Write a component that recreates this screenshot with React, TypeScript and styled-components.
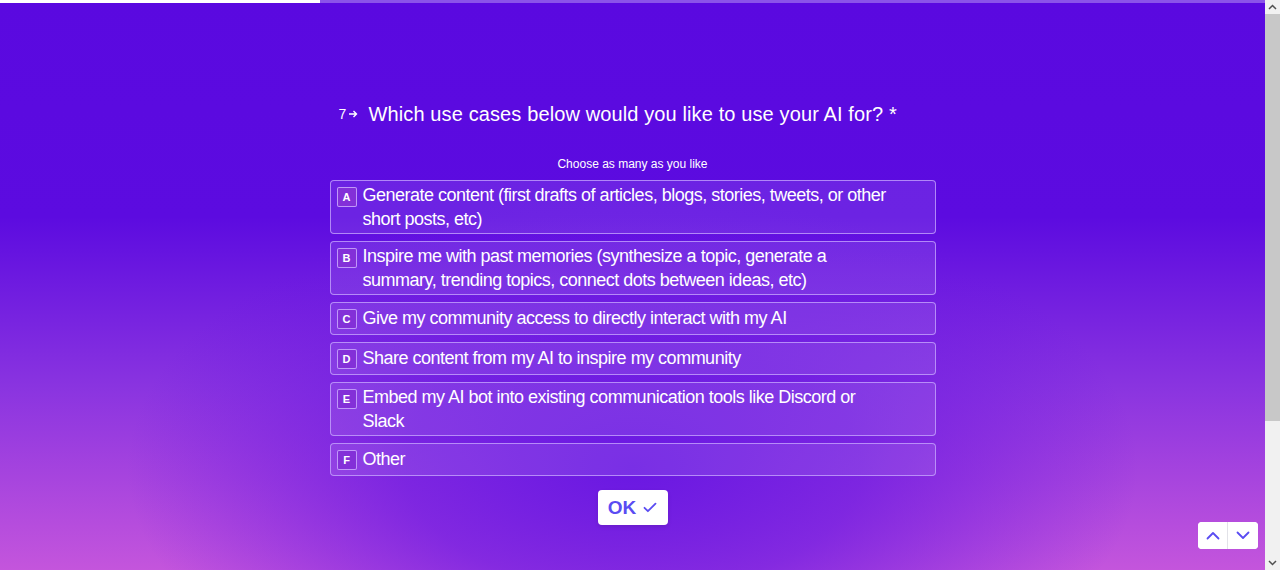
import React from "react";
import styled, { createGlobalStyle } from "styled-components";

const Global = createGlobalStyle`
  html, body { margin: 0; padding: 0; }
  body {
    font-family: "Liberation Sans", Arial, Helvetica, sans-serif;
    background: #5a09e0;
  }
  * { box-sizing: border-box; }
`;

const Page = styled.div`
  display: flex;
  height: 570px;
  overflow: hidden;
`;

const Screen = styled.main`
  position: relative;
  flex: 1;
  height: 570px;
  display: flex;
  flex-direction: column;
  background:
    radial-gradient(ellipse 40% 48% at 50% 82%, rgba(106, 24, 226, 1) 0%, rgba(106, 24, 226, 0.7) 45%, rgba(106, 24, 226, 0) 100%),
    linear-gradient(180deg, #5a09e0 0%, #5c0be0 38%, #8a34e0 68%, #c455dc 100%);
  overflow: hidden;
`;

const Progress = styled.div`
  height: 3px;
  background: rgba(255, 255, 255, 0.3);
  display: flex;
`;

const ProgressFill = styled.div`
  height: 100%;
  background: #ffffff;
`;

const Content = styled.section`
  width: 606px;
  margin: 0 auto;
  padding-top: 97px;
  display: flex;
  flex-direction: column;
`;

const QuestionRow = styled.div`
  display: flex;
  align-items: center;
  padding-left: 9px;
  color: #ffffff;
`;

const QNumber = styled.span`
  display: inline-flex;
  align-items: center;
  gap: 2px;
  font-size: 14px;
  margin-right: 10px;
  width: 20px;
`;

const QText = styled.h1`
  margin: 0;
  font-size: 20px;
  font-weight: 400;
  line-height: 28px;
  letter-spacing: 0.12px;
`;

const Hint = styled.p`
  margin: 28px 0 8px;
  text-align: center;
  font-size: 12px;
  line-height: 16px;
  color: #ffffff;
`;

const Options = styled.ul`
  list-style: none;
  margin: 0;
  padding: 0;
  display: flex;
  flex-direction: column;
  gap: 7px;
`;

const Option = styled.li`
  display: flex;
  align-items: flex-start;
  min-height: 33px;
  padding: 2px 36px 2px 6px;
  border: 1px solid rgba(200, 170, 255, 0.75);
  border-radius: 4px;
  background: rgba(255, 255, 255, 0.1);
  color: #ffffff;
`;

const Key = styled.span`
  flex: 0 0 auto;
  width: 20px;
  height: 20px;
  margin-top: 4px;
  margin-right: 6px;
  display: flex;
  align-items: center;
  justify-content: center;
  border: 1px solid rgba(205, 170, 255, 0.85);
  border-radius: 2px;
  background: #8330d8;
  font-size: 11px;
  font-weight: 700;
  color: #ffffff;
`;

const Label = styled.span<{ $single?: boolean }>`
  font-size: 18px;
  line-height: 24px;
  letter-spacing: -0.5px;
  padding-top: ${(p) => (p.$single ? "1px" : "0")};
`;

const Actions = styled.div`
  display: flex;
  justify-content: center;
  margin-top: 14px;
`;

const OkButton = styled.button`
  width: 70px;
  height: 35px;
  border: none;
  border-radius: 4px;
  background: #ffffff;
  color: #5a4cf2;
  font-family: inherit;
  font-size: 19px;
  font-weight: 700;
  display: flex;
  align-items: center;
  justify-content: center;
  gap: 7px;
  box-shadow: 0 2px 4px rgba(0, 0, 0, 0.1);
  cursor: pointer;
`;

const Nav = styled.div`
  position: absolute;
  right: 7px;
  bottom: 21px;
  display: flex;
  height: 27px;
  border-radius: 4px;
  background: #ffffff;
  overflow: hidden;
`;

const NavButton = styled.button<{ $divider?: boolean }>`
  width: 30px;
  height: 27px;
  border: none;
  background: #ffffff;
  border-right: ${(p) => (p.$divider ? "1px solid #e2e2e8" : "none")};
  display: flex;
  align-items: center;
  justify-content: center;
  color: #5a4cf2;
  padding: 0;
`;

const Scrollbar = styled.aside`
  flex: 0 0 15px;
  height: 570px;
  background: #f1f1f1;
  display: flex;
  flex-direction: column;
`;

const ScrollArrow = styled.div`
  height: 14px;
  display: flex;
  align-items: center;
  justify-content: center;
`;

const ScrollThumb = styled.div`
  height: 407px;
  background: #c8c8c8;
`;

const ScrollTrack = styled.div`
  flex: 1;
`;

const options = [
  { k: "A", t: "Generate content (first drafts of articles, blogs, stories, tweets, or other short posts, etc)" },
  { k: "B", t: "Inspire me with past memories (synthesize a topic, generate a summary, trending topics, connect dots between ideas, etc)" },
  { k: "C", t: "Give my community access to directly interact with my AI", single: true },
  { k: "D", t: "Share content from my AI to inspire my community", single: true },
  { k: "E", t: "Embed my AI bot into existing communication tools like Discord or Slack" },
  { k: "F", t: "Other", single: true },
];

export default function App() {
  return (
    <Page>
      <Global />
      <Screen>
        <Progress>
          <ProgressFill style={{ width: "320px" }} />
        </Progress>
        <Content>
          <QuestionRow>
            <QNumber>
              7
              <svg width="10" height="10" viewBox="0 0 10 10" fill="none" stroke="#fff" strokeWidth="1.4">
                <path d="M1 5h7.5M5.5 2l3 3-3 3" />
              </svg>
            </QNumber>
            <QText>Which use cases below would you like to use your AI for? *</QText>
          </QuestionRow>
          <Hint>Choose as many as you like</Hint>
          <Options>
            {options.map((o) => (
              <Option key={o.k}>
                <Key>{o.k}</Key>
                <Label $single={o.single}>{o.t}</Label>
              </Option>
            ))}
          </Options>
          <Actions>
            <OkButton>
              OK
              <svg width="14" height="11" viewBox="0 0 14 11" fill="none" stroke="#5a4cf2" strokeWidth="1.8" strokeLinecap="round" strokeLinejoin="round">
                <path d="M1.5 5.8l3.4 3.4L12.5 1.6" />
              </svg>
            </OkButton>
          </Actions>
        </Content>
        <Nav>
          <NavButton $divider aria-label="Previous">
            <svg width="14" height="9" viewBox="0 0 14 9" fill="none" stroke="#5a4cf2" strokeWidth="1.8" strokeLinecap="round" strokeLinejoin="round">
              <path d="M1.5 7.5L7 2l5.5 5.5" />
            </svg>
          </NavButton>
          <NavButton aria-label="Next">
            <svg width="14" height="9" viewBox="0 0 14 9" fill="none" stroke="#5a4cf2" strokeWidth="1.8" strokeLinecap="round" strokeLinejoin="round">
              <path d="M1.5 1.5L7 7l5.5-5.5" />
            </svg>
          </NavButton>
        </Nav>
      </Screen>
      <Scrollbar>
        <ScrollArrow>
          <svg width="9" height="6" viewBox="0 0 9 6" fill="none" stroke="#505050" strokeWidth="1.5">
            <path d="M1 5l3.5-3.5L8 5" />
          </svg>
        </ScrollArrow>
        <ScrollThumb />
        <ScrollTrack />
        <ScrollArrow>
          <svg width="9" height="6" viewBox="0 0 9 6" fill="none" stroke="#505050" strokeWidth="1.5">
            <path d="M1 1l3.5 3.5L8 1" />
          </svg>
        </ScrollArrow>
      </Scrollbar>
    </Page>
  );
}
